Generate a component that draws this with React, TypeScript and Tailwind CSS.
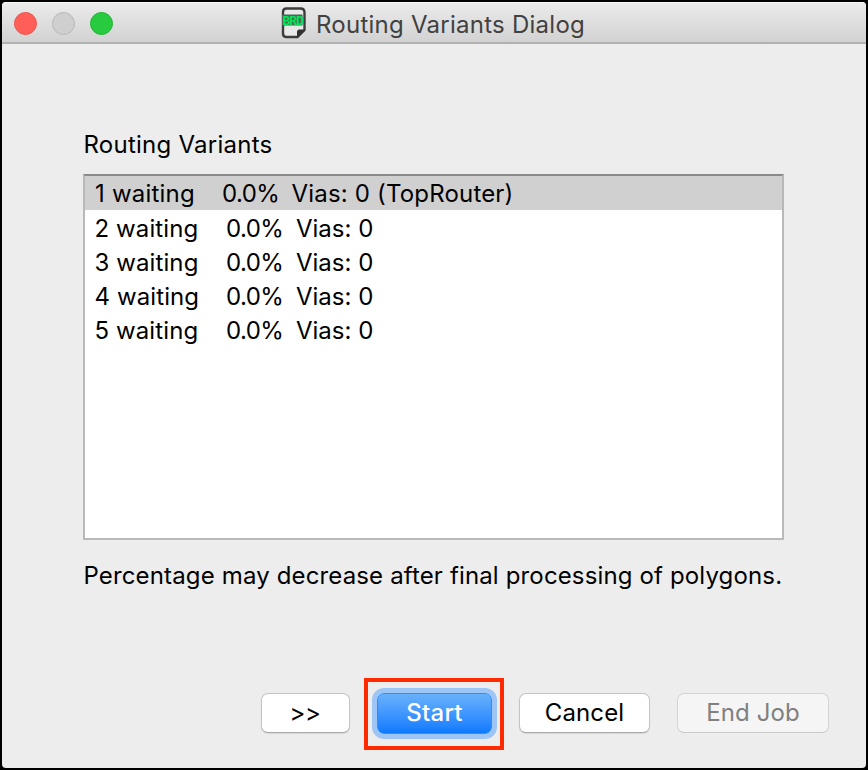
const variants = [
  { id: 1, label: "1 waiting", percent: "0.0%", vias: "Vias: 0 (TopRouter)" },
  { id: 2, label: "2 waiting", percent: "0.0%", vias: "Vias: 0" },
  { id: 3, label: "3 waiting", percent: "0.0%", vias: "Vias: 0" },
  { id: 4, label: "4 waiting", percent: "0.0%", vias: "Vias: 0" },
  { id: 5, label: "5 waiting", percent: "0.0%", vias: "Vias: 0" },
];

function BoardIcon() {
  return (
    <svg width="26" height="32" viewBox="0 0 26 32" className="shrink-0 overflow-visible">
      <path
        d="M5.5 1.5H19.5Q23.5 1.5 23.5 5.5V23L16.5 30H5.5Q2 30 2 26.5V5Q2 1.5 5.5 1.5Z"
        fill="#e9e9e9"
        stroke="#3c3c3c"
        strokeWidth="2.4"
      />
      <path d="M16.5 30V24.5Q16.5 23 18 23H23.5Z" fill="#303030" stroke="#303030" strokeWidth="1" />
      <rect x="1" y="7.5" width="20.5" height="11" fill="#4e6256" />
      <text
        x="1.5"
        y="17.5"
        fontFamily="Liberation Mono, monospace"
        fontSize="13"
        letterSpacing="-1.1"
        fontWeight="700"
        fill="#00e558"
      >
        BRD
      </text>
    </svg>
  );
}

export default function App() {
  return (
    <div className="h-[770px] w-[868px] border-2 border-black bg-black font-['Inter',sans-serif] text-[24px] leading-[34px] text-black">
      <div className="flex h-[766px] flex-col overflow-hidden rounded-[4px] bg-[#ededed]">
        <header className="flex h-[42px] shrink-0 items-center border-b-2 border-[#b1b1b1] border-t border-t-[#f7f7f7] bg-linear-to-b from-[#ebebeb] to-[#d2d2d2]">
          <div className="flex w-[279px] gap-[15px] pl-[12.3px] pt-px">
            <span className="size-[23px] rounded-full border border-[#ec5350] bg-[#ff5f57]" />
            <span className="size-[23px] rounded-full border border-[#b8b8b8] bg-[#cfcfcf]" />
            <span className="size-[23px] rounded-full border border-[#20b534] bg-[#28cb40]" />
          </div>
          <BoardIcon />
          <h1 className="ml-[9px] whitespace-nowrap pt-1 tracking-[0.25px] text-[#414141]">Routing Variants Dialog</h1>
        </header>

        <main className="flex flex-1 flex-col pl-[81px]">
          <h2 className="mt-[84px] h-[34px] whitespace-nowrap pl-[0.5px] tracking-[0.25px]">Routing Variants</h2>
          <ul className="mt-[12px] h-[366px] w-[701px] border-2 border-[#b9b9b9] border-t-[#8a8a8a] bg-white">
            {variants.map((v) => (
              <li
                key={v.id}
                className={
                  v.id === 1
                    ? "flex h-[34px] whitespace-nowrap bg-[#d0d0d0] pl-[10px] pt-px tracking-[0.18px]"
                    : "flex h-[34.3px] whitespace-nowrap pl-[9.5px] pt-[1.6px]"
                }
              >
                <span className={v.id === 1 ? "w-[127px] tracking-[0.2px]" : "w-[131.5px] tracking-[0.1px]"}>{v.label}</span>
                <span className={v.id === 1 ? "w-[69.5px] tracking-[-0.6px]" : "w-[70px] tracking-[-0.6px]"}>{v.percent}</span>
                <span>{v.vias}</span>
              </li>
            ))}
          </ul>
          <p className="mt-[19px] h-[34px] whitespace-nowrap pl-[0.5px] tracking-[0.145px]">
            Percentage may decrease after final processing of polygons.
          </p>

          <div className="mt-[85px] flex h-[72px] items-center pl-[178px]">
            <button className="mt-[-2px] h-10 w-[89px] rounded-[7px] border border-[#c4c4c4] border-b-[#aaaaaa] bg-white pr-px tracking-[-0.5px] shadow-[0_1px_1px_#00000018]">
              &gt;&gt;
            </button>
            <div className="ml-[14px] flex h-[72px] w-[140px] items-center justify-center border-4 border-[#ff2a00]">
              <button className="mt-[-2px] h-[41px] w-[115px] rounded-[7px] border border-[#378cf2] bg-linear-to-b from-[#68b1fb] to-[#087aff] pl-px font-medium tracking-[0.2px] text-white shadow-[0_0_0_5px_#9dc5f5]">
                Start
              </button>
            </div>
            <button className="ml-[15px] mt-[-2px] h-10 w-[131px] rounded-[7px] border border-[#c4c4c4] border-b-[#aaaaaa] bg-white tracking-[0.1px] shadow-[0_1px_1px_#00000018]">
              Cancel
            </button>
            <button className="ml-[27px] mt-[-2px] h-10 w-[152px] rounded-[7px] border border-[#d4d4d4] border-b-[#c8c8c8] bg-[#f5f5f5] tracking-[0.1px] text-[#808080]">
              End Job
            </button>
          </div>
        </main>
      </div>
    </div>
  );
}
